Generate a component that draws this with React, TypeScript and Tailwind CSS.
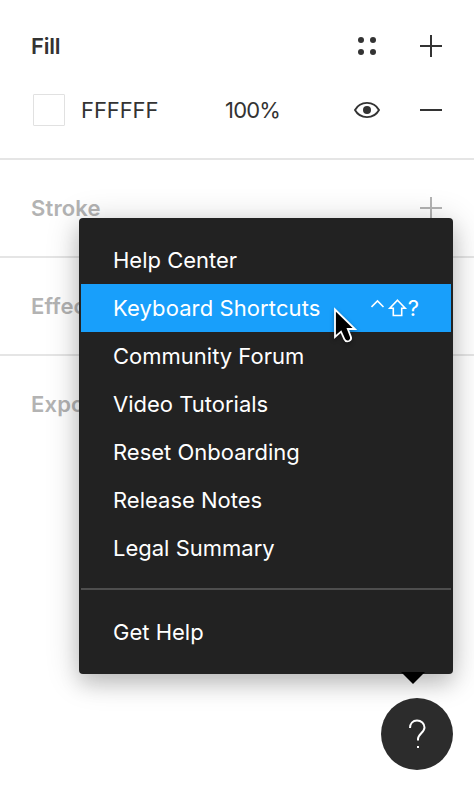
import type { ReactNode } from "react";

const helpItems = [
  "Help Center",
  "Keyboard Shortcuts",
  "Community Forum",
  "Video Tutorials",
  "Reset Onboarding",
  "Release Notes",
  "Legal Summary",
];

function PlusIcon() {
  return (
    <svg width="22" height="22" viewBox="0 0 22 22" fill="currentColor">
      <path d="M10 0h2v10h10v2H12v10h-2V12H0v-2h10z" />
    </svg>
  );
}

function MinusIcon() {
  return (
    <svg width="22" height="22" viewBox="0 0 22 22" fill="currentColor">
      <path d="M0 10h22v2H0z" />
    </svg>
  );
}

function StylesIcon() {
  return (
    <svg width="18" height="18" viewBox="0 0 18 18" fill="currentColor">
      <circle cx="3" cy="3" r="3" />
      <circle cx="15" cy="3" r="3" />
      <circle cx="3" cy="15" r="3" />
      <circle cx="15" cy="15" r="3" />
    </svg>
  );
}

function EyeIcon() {
  return (
    <svg width="26" height="18" viewBox="0 0 26 18" fill="none">
      <path
        d="M1 9C3.6 4.3 8 1.9 13 1.9S22.4 4.3 25 9c-2.6 4.700-7 7.100-12 7.100S3.600 13.700 1 9z"
        stroke="currentColor"
        strokeWidth="1.900"
        strokeLinejoin="round"
      />
      <circle cx="13" cy="9" r="4" fill="currentColor" />
    </svg>
  );
}

function ShortcutKeys() {
  return (
    <svg width="37" height="20" viewBox="0 0 37 20" fill="none" stroke="white" strokeWidth="1.600">
      <path d="M0.500 9L6.500 3L12.500 9" />
      <path d="M26.500 2.200L34.200 10.200H30.700V17.500H22.300V10.200H18.800z" />
    </svg>
  );
}

function Cursor() {
  return (
    <svg
      width="28"
      height="42"
      viewBox="0 0 28 42"
      className="absolute left-[253px] top-[87px] drop-shadow-[0_2px_2px_rgba(0,0,0,0.35)]"
    >
      <path
        d="M3 4.500V32L9 26.700L12.300 34.100Q13.800 37.300 17 36Q20 34.600 18.800 31.600L15.800 24H23z"
        fill="black"
        stroke="white"
        strokeWidth="1.800"
        strokeLinejoin="miter"
      />
    </svg>
  );
}

function Section({ title, children }: { title: string; children?: ReactNode }) {
  return (
    <section className="flex h-[98px] items-center justify-between border-b-2 border-[#e5e5e5] pr-8 pl-[31px] text-[#b3b3b3]">
      <h2 className="font-semibold tracking-[0.15px]">{title}</h2>
      {children}
    </section>
  );
}

function HelpMenu() {
  return (
    <div className="absolute left-[79px] top-[218px] h-[456px] w-[374px] rounded-[4px] bg-[#222222] px-0.5 py-[18px] text-white shadow-[0_4px_34px_rgba(0,0,0,0.2),0_10px_20px_rgba(0,0,0,0.15)]">
      {helpItems.map((item) => (
        <div
          key={item}
          className={
            item === "Keyboard Shortcuts"
              ? "flex h-12 items-center justify-between bg-[#189ffb] pr-8 pl-8 tracking-[0.1px]"
              : "flex h-12 items-center pl-8"
          }
        >
          <span>{item}</span>
          {item === "Keyboard Shortcuts" && (
            <span className="flex items-center">
              <ShortcutKeys />
              <span>?</span>
            </span>
          )}
        </div>
      ))}
      <div className="mt-4 mb-[18px] h-[2px] bg-[#4e4e4e]" />
      <div className="flex h-12 items-center pl-8">Get Help</div>
      <Cursor />
      <svg width="24" height="12" viewBox="0 0 24 12" className="absolute left-[322px] top-[454px]">
        <path d="M0 0H24L12 12z" fill="black" />
      </svg>
    </div>
  );
}

export default function App() {
  return (
    <div className="relative h-[790px] w-[474px] overflow-hidden bg-white font-[Inter,sans-serif] text-[22px] leading-[32px] text-[#333333]">
      <section className="flex h-[160px] flex-col border-b-2 border-[#e5e5e5] pt-[14px] pr-8 pl-[31px]">
        <div className="flex h-16 items-center">
          <h2 className="flex-1 font-semibold tracking-[-0.2px]">Fill</h2>
          <div className="mr-11">
            <StylesIcon />
          </div>
          <PlusIcon />
        </div>
        <div className="flex h-16 items-center">
          <span className="ml-0.5 size-8 rounded-[1px] border border-[#e1e1e1]" />
          <span className="ml-4 w-36 tracking-[-0.1px]">FFFFFF</span>
          <span className="flex-1 tracking-[-0.8px]">100%</span>
          <div className="mr-10">
            <EyeIcon />
          </div>
          <MinusIcon />
        </div>
      </section>
      <Section title="Stroke">
        <PlusIcon />
      </Section>
      <Section title="Effects" />
      <div className="flex h-24 items-center pl-[31px] font-semibold tracking-[0.15px] text-[#b3b3b3]">Export</div>
      <HelpMenu />
      <button className="absolute left-[381px] top-[698px] flex size-[72px] items-center justify-center rounded-full bg-[#2c2c2c]">
        <svg width="18" height="30" viewBox="0 0 18 30" fill="none">
          <path
            d="M2 9C2 4.500 4.800 1.500 9 1.500S16.500 4.500 16.500 8.500C16.500 13.500 10 15 10 20V21.500"
            stroke="white"
            strokeWidth="2"
          />
          <path d="M9 27h2v2H9z" fill="white" />
        </svg>
      </button>
    </div>
  );
}
